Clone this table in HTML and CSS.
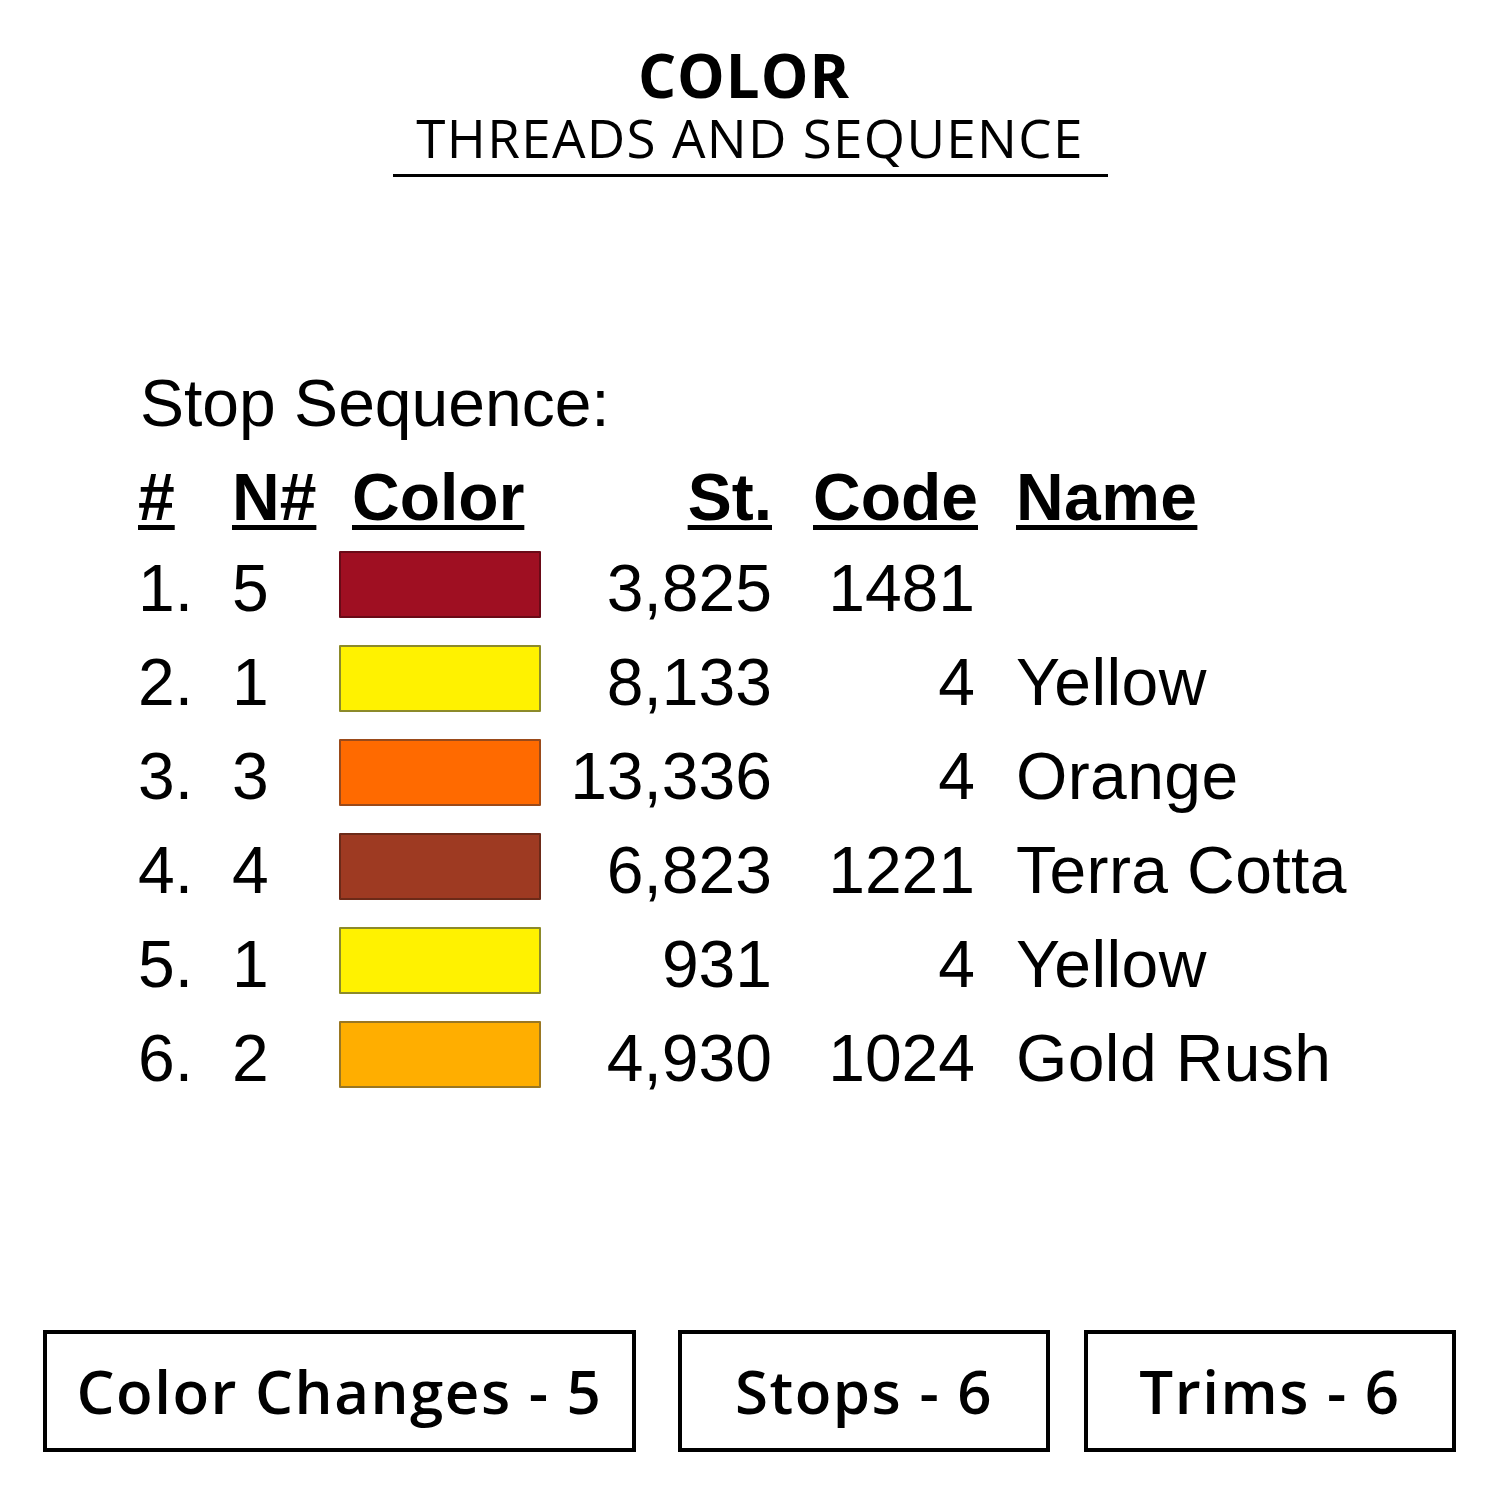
FILE: index.html
```html
<!DOCTYPE html>
<html>
<head>
<meta charset="utf-8">
<link rel="stylesheet" href="styles.css">
</head>
<body>
<div class="page">
  <header class="title">
    <div class="title-main">COLOR</div>
    <div class="title-sub">THREADS AND SEQUENCE</div>
  </header>

  <section class="sequence">
    <div class="seq-label">Stop Sequence:</div>
    <div class="grid">
      <div class="hd c-num"><span>#</span></div>
      <div class="hd c-n"><span>N#</span></div>
      <div class="hd c-color"><span>Color</span></div>
      <div class="hd c-st"><span>St.</span></div>
      <div class="hd c-code"><span>Code</span></div>
      <div class="hd c-name"><span>Name</span></div>

      <div class="c c-num">1.</div><div class="c c-n">5</div><div class="c c-color"><div class="sw sw-red"></div></div><div class="c c-st">3,825</div><div class="c c-code">1481</div><div class="c c-name"></div>
      <div class="c c-num">2.</div><div class="c c-n">1</div><div class="c c-color"><div class="sw sw-yellow"></div></div><div class="c c-st">8,133</div><div class="c c-code">4</div><div class="c c-name">Yellow</div>
      <div class="c c-num">3.</div><div class="c c-n">3</div><div class="c c-color"><div class="sw sw-orange"></div></div><div class="c c-st">13,336</div><div class="c c-code">4</div><div class="c c-name">Orange</div>
      <div class="c c-num">4.</div><div class="c c-n">4</div><div class="c c-color"><div class="sw sw-terra"></div></div><div class="c c-st">6,823</div><div class="c c-code">1221</div><div class="c c-name">Terra Cotta</div>
      <div class="c c-num">5.</div><div class="c c-n">1</div><div class="c c-color"><div class="sw sw-yellow"></div></div><div class="c c-st">931</div><div class="c c-code">4</div><div class="c c-name">Yellow</div>
      <div class="c c-num">6.</div><div class="c c-n">2</div><div class="c c-color"><div class="sw sw-gold"></div></div><div class="c c-st">4,930</div><div class="c c-code">1024</div><div class="c c-name">Gold Rush</div>
    </div>
  </section>

  <footer class="stats">
    <div class="stat stat-wide">Color Changes - 5</div>
    <div class="stat stat-mid">Stops - 6</div>
    <div class="stat stat-end">Trims - 6</div>
  </footer>
</div>
</body>
</html>
```

FILE: styles.css
```css
html, body {
  margin: 0;
  padding: 0;
  background: #ffffff;
}

.page {
  width: 1500px;
  height: 1500px;
  color: #000;
  display: flex;
  flex-direction: column;
}

.title {
  margin: 0 auto;
  padding-top: 42px;
  width: 715px;
  border-bottom: 3px solid #000;
  text-align: center;
  font-family: "Open Sans", "DejaVu Sans", sans-serif;
}

.title-main {
  font-weight: 700;
  font-size: 60px;
  line-height: 66px;
  letter-spacing: 1px;
  padding-right: 12px;
}

.title-sub {
  font-weight: 400;
  font-size: 53px;
  line-height: 60px;
  letter-spacing: 1.3px;
  padding-bottom: 6px;
}

.sequence {
  padding-left: 140px;
  padding-top: 176px;
  font-family: "Liberation Sans", Arial, sans-serif;
  font-size: 66px;
}

.seq-label {
  line-height: 100px;
}

.grid {
  display: grid;
  grid-template-columns: 92px 107px 202px 231px 203px auto;
  grid-template-rows: 88px repeat(6, 94px);
  align-items: center;
}

.hd {
  font-weight: 700;
  line-height: 88px;
}

.hd span {
  text-decoration: underline;
  text-decoration-thickness: 5px;
  text-underline-offset: 5px;
}

.c {
  line-height: 94px;
}

.c-st, .c-code {
  text-align: right;
}

.hd.c-color {
  padding-left: 13px;
}

.hd.c-code {
  margin-right: -3px;
}

.c-name {
  padding-left: 41px;
  white-space: nowrap;
  letter-spacing: 0.4px;
}

.c-num {
  margin-left: -2px;
}

.sw {
  box-sizing: border-box;
  width: 202px;
  height: 67px;
  margin-top: -8px;
  border: 2px solid rgba(0, 0, 0, 0.45);
  border-radius: 1px;
}

.sw-red { background: #9f0f22; border-color: #6a0a17; }
.sw-yellow { background: #fff200; border-color: #8c8a2a; }
.sw-orange { background: #ff6a00; border-color: #9a4a1a; }
.sw-terra { background: #9e3a22; border-color: #6c2a18; }
.sw-gold { background: #ffae00; border-color: #9a7722; }

.stats {
  margin-top: auto;
  margin-bottom: 48px;
  padding-left: 43px;
  display: flex;
  font-family: "Open Sans", "DejaVu Sans", sans-serif;
  font-weight: 600;
  font-size: 60px;
}

.stat {
  box-sizing: border-box;
  height: 122px;
  border: 4px solid #000;
  display: flex;
  align-items: center;
  justify-content: center;
  letter-spacing: 1.5px;
}

.stat-wide { width: 593px; }
.stat-mid { width: 372px; margin-left: 42px; }
.stat-end { width: 372px; margin-left: 34px; }
```
